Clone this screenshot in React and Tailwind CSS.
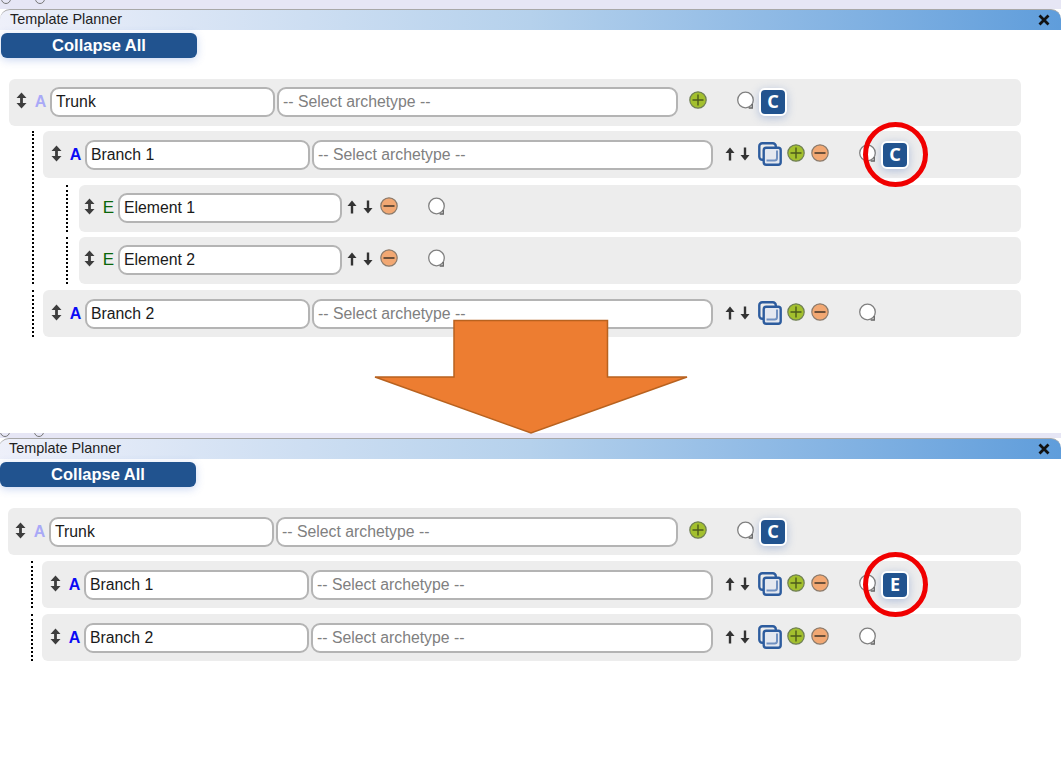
import React from "react";

function Grip() {
    return (
        <svg width="11" height="17" viewBox="0 0 11 17" className="-mt-[3px] text-[#3d3d3d]">
            <path d="M5.500 3v11" stroke="currentColor" strokeWidth="2.8" />
            <path d="M5.500 0.500 10.500 6H0.500zM5.500 16.500 10.500 11H0.500z" fill="currentColor" />
        </svg>
    );
}

function Arrow({ down, className }) {
    return (
        <svg width="12" height="14" viewBox="0 0 12 14" className={`-mt-[2px] text-[#333] ${down ? "rotate-180" : ""} ${className}`}>
            <path d="M6 3v10.500" stroke="currentColor" strokeWidth="2.4" />
            <path d="M6 0.500 10.500 6h-9z" fill="currentColor" />
        </svg>
    );
}

function Copy() {
    return (
        <svg width="24" height="24" viewBox="0 0 24 24" className="-mt-[2px] ml-[7px]" fill="none">
            <rect x="1.300" y="1.300" width="16.500" height="16.500" rx="3" stroke="#2d5c9e" strokeWidth="2.400" />
            <rect x="5.700" y="5.700" width="17" height="17" rx="2.500" fill="#e4e8f0" stroke="#2d5c9e" strokeWidth="2.400" />
            <path d="M8.500 18.500h8a2.500 2.500 0 0 0 2.500-2.500V8.500" stroke="#7090c0" strokeWidth="2" />
        </svg>
    );
}

function Plus({ className }) {
    return (
        <svg width="18" height="18" viewBox="0 0 18 18" className={`-mt-[3px] ${className}`}>
            <circle cx="9" cy="9" r="8.200" fill="#a3c02e" stroke="#6f7f55" strokeWidth="1.200" />
            <path d="M9 3.500v11M3.500 9h11" stroke="#4c5a1c" strokeWidth="1.400" />
        </svg>
    );
}

function Minus({ className }) {
    return (
        <svg width="18" height="18" viewBox="0 0 18 18" className={`-mt-[3px] ${className}`}>
            <circle cx="9" cy="9" r="8.200" fill="#f2a873" stroke="#8b7b6c" strokeWidth="1.200" />
            <path d="M3.500 9h11" stroke="#4a3a2c" strokeWidth="1.600" />
        </svg>
    );
}

function Comment() {
    return (
        <svg width="19" height="19" viewBox="0 0 19 19" className="-mt-[3px] ml-[29px]" fill="none">
            <circle cx="9.500" cy="9" r="7.800" fill="#fff" stroke="#808080" strokeWidth="1.300" />
            <path d="M16.300 13v4h-3.600" stroke="#666" strokeWidth="1.300" />
        </svg>
    );
}

function Badge({ label, circled, className }) {
    return (
        <div className={`relative ${className}`}>
            <div className="flex h-[28px] w-[28px] items-center justify-center rounded-md border-2 border-white bg-[#21538f] text-[18px] font-bold text-white shadow-[0_2px_8px_rgba(70,110,190,0.35)] font-['Noto_Sans',sans-serif]">
                {label}
            </div>
            {circled && (
                <div className="absolute left-[-18px] top-[-19px] h-[65px] w-[65px] rounded-full border-[5px] border-[#f00000]" />
            )}
        </div>
    );
}

function Field({ value, width }) {
    return (
        <input
            readOnly
            defaultValue={value}
            className={`h-[30px] ${width} rounded-[9px] border-2 border-[#b4b4b4] bg-white px-[4px] text-[15.8px] text-[#1a1a1a]`}
        />
    );
}

function Archetype({ width }) {
    return (
        <input
            readOnly
            placeholder="-- Select archetype --"
            className={`ml-[2px] h-[30px] ${width} rounded-[9px] border-2 border-[#b4b4b4] bg-white px-[4px] text-[15.8px] placeholder:text-[#808080]`}
        />
    );
}

function Row({ pad, letter, letterClass, name, width = "w-[225px]", children }) {
    return (
        <div className={`flex h-[47px] items-center rounded-md bg-[#ededed] ${pad}`}>
            <div className="flex w-[20px] justify-center"><Grip /></div>
            <div className={`w-[19px] text-center ${letterClass}`}>{letter}</div>
            <Field value={name} width={width} />
            {children}
        </div>
    );
}

function Trunk({ selectWidth, pad }) {
    return (
        <Row pad={pad} letter="A" letterClass="text-[16px] font-bold text-[#a9a9f7]" name="Trunk">
            <Archetype width={selectWidth} />
            <Plus className="ml-[11px]" />
            <Comment />
            <Badge label="C" className="ml-[4px]" />
        </Row>
    );
}

function Branch({ name, badge, circled, selectWidth }) {
    return (
        <Row pad="pl-[3px]" letter="A" letterClass="text-[16px] font-bold text-[#0a0af5]" name={name}>
            <Archetype width={selectWidth} />
            <Arrow className="ml-[11px]" />
            <Arrow down className="ml-[3px]" />
            <Copy />
            <Plus className="ml-[5px]" />
            <Minus className="ml-[6px]" />
            <Comment />
            {badge && <Badge label={badge} circled={circled} className="ml-[4px]" />}
        </Row>
    );
}

function Element({ name }) {
    return (
        <div className="ml-[23px] border-l-2 border-dotted border-black pl-[11px]">
            <Row pad="pb-[2px]" letter="E" letterClass="text-[17px] text-[#0a660a]" name={name} width="w-[224px]">
                <Arrow className="ml-[4px]" />
                <Arrow down className="ml-[4px]" />
                <Minus className="ml-[6px]" />
                <Comment />
            </Row>
        </div>
    );
}

function Knobs() {
    return (
        <div className="flex h-full gap-[24px] overflow-hidden">
            <div className="ml-[1px] mt-[-6px] h-[10px] w-[10px] rounded-full border border-[#777] bg-[#e6e6f5]" />
            <div className="mt-[-6px] h-[10px] w-[10px] rounded-full border border-[#777] bg-[#e6e6f5]" />
        </div>
    );
}

function Header() {
    return (
        <>
            <div className="flex h-[21px] items-center justify-between rounded-t-[10px] border-t border-[#a8a8a8] bg-gradient-to-r from-[#eef0fa] via-[#b5d1ec] to-[#5f9ddb] pl-[10px] pr-[11px]">
                <span className="text-[14.4px] text-[#222]">Template Planner</span>
                <svg width="12" height="12" viewBox="0 0 12 12">
                    <path d="M1.500 1.500l9 9M10.500 1.500l-9 9" stroke="#111" strokeWidth="2.800" />
                </svg>
            </div>
            <button className="ml-px mt-[3px] flex h-[25px] w-[196px] items-center justify-center rounded-md bg-[#21538f] text-[16.5px] font-bold text-white shadow-[0_2px_9px_rgba(80,120,210,0.3)]">
                Collapse All
            </button>
        </>
    );
}

export default function App() {
    return (
        <div className="relative h-[771px] w-[1061px] overflow-hidden bg-white font-['Liberation_Sans',sans-serif]">
            {/* before */}
            <div className="h-[433px]">
                <div className="h-[9px] bg-[#e6e6f5]"><Knobs /></div>
                <Header />
                <div className="pl-[9px] pr-[40px] pt-[21px]">
                    <Trunk selectWidth="w-[401px]" pad="pb-[2px] pl-[2px]" />
                    <div className="ml-[23px] mt-[5px] border-l-2 border-dotted border-black pl-[9px]">
                        <Branch name="Branch 1" badge="C" circled selectWidth="w-[401px]" />
                        <div className="mt-[7px]"><Element name="Element 1" /></div>
                        <div className="mt-[5px]"><Element name="Element 2" /></div>
                    </div>
                    <div className="ml-[23px] mt-[6px] border-l-2 border-dotted border-black pl-[9px]">
                        <Branch name="Branch 2" selectWidth="w-[401px]" />
                    </div>
                </div>
            </div>

            {/* after */}
            <div className="-ml-px w-[1062px]">
                <div className="h-[5px] bg-[#e6e6f5]"><Knobs /></div>
                <Header />
                <div className="pl-[9px] pr-[40px] pt-[21px]">
                    <Trunk selectWidth="w-[402px]" pad="pl-[2px]" />
                    <div className="ml-[23px] mt-[6px] border-l-2 border-dotted border-black pl-[9px]">
                        <Branch name="Branch 1" badge="E" circled selectWidth="w-[402px]" />
                    </div>
                    <div className="ml-[23px] mt-[6px] border-l-2 border-dotted border-black pl-[9px]">
                        <Branch name="Branch 2" selectWidth="w-[402px]" />
                    </div>
                </div>
            </div>

            {/* big arrow sits over both panels */}
            <svg width="316" height="116" viewBox="0 0 316 116" className="absolute left-[373px] top-[319px]">
                <path d="M81 1.500H234.500V58H314L158 114 2 58H81z" fill="#ed7d31" stroke="#b8621f" strokeWidth="1.500" />
            </svg>
        </div>
    );
}
